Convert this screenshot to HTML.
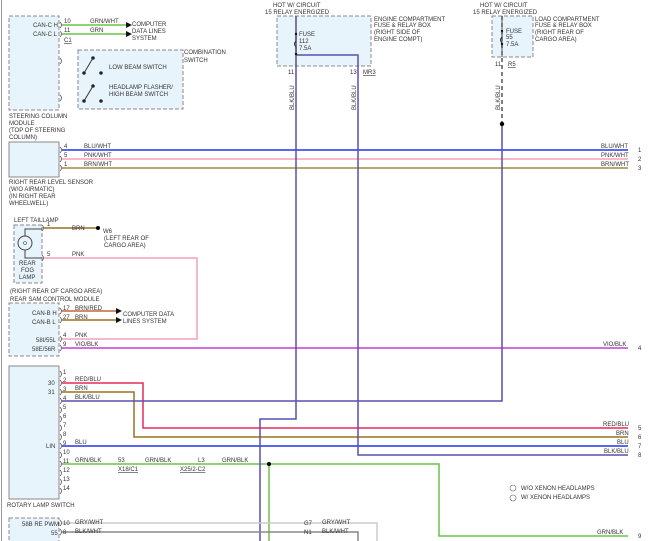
<!DOCTYPE html>
<html><head><meta charset="utf-8"><style>
html,body{margin:0;padding:0;background:#fff;width:650px;height:541px;overflow:hidden}
svg text{font-family:"Liberation Sans",sans-serif;font-size:6px;fill:#333}
</style></head><body>
<svg width="650" height="541" viewBox="0 0 650 541" xmlns="http://www.w3.org/2000/svg">
<line x1="1.5" y1="0" x2="1.5" y2="541" stroke="#999" stroke-width="1"/>
<g fill="#e8f4fb" stroke="#888" stroke-dasharray="4,2" stroke-width="1">
<rect x="9" y="16" width="50" height="94"/>
<rect x="78" y="50" width="105" height="59"/>
<rect x="14" y="225" width="28" height="58"/>
<rect x="9" y="303" width="50" height="53"/>
<rect x="9" y="518" width="50" height="30"/>
<rect x="277" y="16" width="94" height="50"/>
<rect x="492" y="16" width="41" height="41"/>
</g>
<g fill="#e8f4fb" stroke="#888" stroke-width="1">
<rect x="9" y="142" width="50" height="35"/>
<rect x="9" y="366" width="50" height="133"/>
</g>
<g fill="none" stroke="#555" stroke-width="0.8">
<path d="M60,22 q3,3 0,6 M60,31 q3,3 0,6 M60,58 q3,3 0,6 M60,95 q3,3 0,6 M60,147 q3,3 0,6 M60,156 q3,3 0,6 M60,165 q3,3 0,6 M42,225 q3,3 0,6 M42,255 q3,3 0,6 M60,308 q3,3 0,6 M60,317 q3,3 0,6 M60,336 q3,3 0,6 M60,345 q3,3 0,6"/>
<path d="M60,371 q3,3 0,6 M60,380 q3,3 0,6 M60,389 q3,3 0,6 M60,398 q3,3 0,6 M60,407 q3,3 0,6 M60,416 q3,3 0,6 M60,425 q3,3 0,6 M60,434 q3,3 0,6 M60,443 q3,3 0,6 M60,452 q3,3 0,6 M60,461 q3,3 0,6 M60,470 q3,3 0,6 M60,479 q3,3 0,6 M60,488 q3,3 0,6 M60,520 q3,3 0,6 M60,529 q3,3 0,6"/>
</g>
<g fill="none" stroke-width="1.5">
<polyline points="62,25 128,25" stroke="#6cc04a"/>
<polyline points="62,34 128,34" stroke="#6cc04a"/>
<polyline points="62,150 628,150" stroke="#2233ee"/>
<polyline points="62,159 628,159" stroke="#f4a0b8"/>
<polyline points="62,168 628,168" stroke="#a08a40"/>
<polyline points="44,228 97,228" stroke="#9b7020"/>
<polyline points="44,258 197,258 197,339 62,339" stroke="#f4a0b8"/>
<polyline points="62,311 118,311" stroke="#c86432"/>
<polyline points="62,320 118,320" stroke="#9b7020"/>
<polyline points="62,348 628,348" stroke="#c040d0"/>
<polyline points="62,383 143,383 143,428 628,428" stroke="#e8285a"/>
<polyline points="62,392 134,392 134,437 628,437" stroke="#9b7020"/>
<polyline points="62,401 502,401 502,124" stroke="#5a4fb0"/>
<polyline points="62,446 628,446" stroke="#2233ee"/>
<polyline points="62,464 439,464 439,536 628,536" stroke="#6cc04a"/>
<polyline points="269,464 269,541" stroke="#6cc04a"/>
<polyline points="296,16 296,419 260,419 260,541" stroke="#5a4fb0"/>
<polyline points="296,55 358,55 358,455 628,455" stroke="#5a4fb0"/>
<polyline points="62,523 377,523 377,541" stroke="#ccc"/>
<polyline points="62,532 358,532 358,541" stroke="#888"/>
</g>
<line x1="502" y1="16" x2="502" y2="124" stroke="#555" stroke-dasharray="4,3" stroke-width="1.5"/>
<line x1="296" y1="16" x2="296" y2="66" stroke="#555" stroke-width="1"/>
<line x1="502" y1="16" x2="502" y2="57" stroke="#555" stroke-width="1"/>
<circle cx="502" cy="124" r="2.2" fill="#000"/>
<circle cx="269" cy="464" r="2" fill="#000"/>
<circle cx="98" cy="228" r="2" fill="#000"/>
<path d="M126,22 l6,3 l-6,3z M126,31 l6,3 l-6,3z M116,308 l6,3 l-6,3z M116,317 l6,3 l-6,3z" fill="#111"/>
<g stroke="#333" stroke-width="1" fill="#111">
<line x1="84" y1="73" x2="93" y2="58"/><circle cx="84" cy="73" r="1.3"/><circle cx="93" cy="58" r="1.3"/><circle cx="101" cy="73" r="1.3"/>
<line x1="84" y1="101" x2="93" y2="86"/><circle cx="84" cy="101" r="1.3"/><circle cx="93" cy="86" r="1.3"/><circle cx="101" cy="101" r="1.3"/>
</g>
<circle cx="25" cy="243" r="7" fill="none" stroke="#444"/>
<circle cx="25" cy="243" r="1.5" fill="none" stroke="#444" stroke-width=".6"/>
<path d="M25,236 v-7 h17 M25,250 v8 h17" fill="none" stroke="#444"/>
<path d="M296,35 v6 q-3,3 0,6 v5 M502,31 v6 q-3,3 0,6 v5" fill="none" stroke="#333"/>
<g fill="#111"><circle cx="296" cy="34" r="1.2"/><circle cx="296" cy="54" r="1.2"/><circle cx="502" cy="31" r="1.2"/><circle cx="502" cy="44" r="1.2"/></g>
<text x="33" y="27">CAN-C H</text><text x="33" y="36">CAN-C L</text>
<text x="64" y="23">10</text><text x="90" y="23">GRN/WHT</text>
<text x="64" y="32">11</text><text x="90" y="32">GRN</text>
<text x="64" y="42" text-decoration="underline">C1</text>
<text x="132" y="26">COMPUTER</text><text x="132" y="33">DATA LINES</text><text x="132" y="40">SYSTEM</text>
<text x="184" y="54">COMBINATION</text><text x="184" y="62">SWITCH</text>
<text x="109" y="69">LOW BEAM SWITCH</text>
<text x="109" y="89">HEADLAMP FLASHER/</text><text x="109" y="96">HIGH BEAM SWITCH</text>
<text x="9" y="118">STEERING COLUMN</text><text x="9" y="125">MODULE</text><text x="9" y="132">(TOP OF STEERING</text><text x="9" y="139">COLUMN)</text>
<text x="64" y="148">4</text><text x="84" y="148">BLU/WHT</text>
<text x="64" y="157">5</text><text x="84" y="157">PNK/WHT</text>
<text x="64" y="166">1</text><text x="84" y="166">BRN/WHT</text>
<text x="9" y="184">RIGHT REAR LEVEL SENSOR</text><text x="9" y="191">(W/O AIRMATIC)</text><text x="9" y="198">(IN RIGHT REAR</text><text x="9" y="205">WHEELWELL)</text>
<text x="14" y="222">LEFT TAILLAMP</text>
<text x="47" y="226">1</text><text x="72" y="230">BRN</text>
<text x="103" y="233">W6</text><text x="104" y="240">(LEFT REAR OF</text><text x="104" y="247">CARGO AREA)</text>
<text x="47" y="256">5</text><text x="72" y="256">PNK</text>
<text x="19" y="265">REAR</text><text x="21" y="272">FOG</text><text x="19" y="279">LAMP</text>
<text x="10" y="293">(RIGHT REAR OF CARGO AREA)</text><text x="10" y="301">REAR SAM CONTROL MODULE</text>
<text x="32" y="315">CAN-B H</text><text x="32" y="324">CAN-B L</text>
<text x="63" y="310">17</text><text x="75" y="310">BRN/RED</text>
<text x="63" y="319">27</text><text x="75" y="319">BRN</text>
<text x="123" y="316">COMPUTER DATA</text><text x="123" y="323">LINES SYSTEM</text>
<text x="63" y="337">4</text><text x="75" y="337">PNK</text>
<text x="36" y="342">58I/55L</text><text x="32" y="351">58E/56R</text>
<text x="63" y="346">9</text><text x="75" y="346">VIO/BLK</text>
<text x="603" y="346">VIO/BLK</text><text x="638" y="350">4</text>
<text x="601" y="148">BLU/WHT</text><text x="638" y="152">1</text>
<text x="601" y="157">PNK/WHT</text><text x="638" y="161">2</text>
<text x="601" y="166">BRN/WHT</text><text x="638" y="170">3</text>
<text x="48" y="385">30</text><text x="48" y="394">31</text><text x="46" y="448">LIN</text>
<text x="63" y="374">1</text>
<text x="63" y="382">2</text><text x="75" y="381">RED/BLU</text>
<text x="63" y="391">3</text><text x="75" y="390">BRN</text>
<text x="63" y="400">4</text><text x="75" y="399">BLK/BLU</text>
<text x="63" y="409">5</text><text x="63" y="418">6</text><text x="63" y="427">7</text><text x="63" y="436">8</text>
<text x="63" y="445">9</text><text x="75" y="444">BLU</text>
<text x="63" y="454">10</text>
<text x="63" y="463">11</text><text x="75" y="462">GRN/BLK</text>
<text x="118" y="462">53</text><text x="145" y="462">GRN/BLK</text><text x="198" y="462">L3</text><text x="222" y="462">GRN/BLK</text>
<text x="118" y="471" text-decoration="underline">X18/C1</text><text x="180" y="471" text-decoration="underline">X25/2-C2</text>
<text x="63" y="472">12</text><text x="63" y="481">13</text><text x="63" y="490">14</text>
<text x="7" y="507">ROTARY LAMP SWITCH</text>
<text x="22" y="526">58B RE PWM</text><text x="51" y="535">55</text>
<text x="63" y="525">10</text><text x="75" y="524">GRY/WHT</text>
<text x="63" y="534">8</text><text x="75" y="533">BLK/WHT</text>
<text x="304" y="525">G7</text><text x="322" y="524">GRY/WHT</text>
<text x="304" y="534">N1</text><text x="322" y="533">BLK/WHT</text>
<text x="603" y="426">RED/BLU</text><text x="638" y="430">5</text>
<text x="616" y="435">BRN</text><text x="638" y="439">6</text>
<text x="617" y="444">BLU</text><text x="638" y="448">7</text>
<text x="604" y="453">BLK/BLU</text><text x="638" y="457">8</text>
<text x="597" y="534">GRN/BLK</text><text x="638" y="538">9</text>
<text x="521" y="490">W/O XENON HEADLAMPS</text><text x="521" y="499">W/ XENON HEADLAMPS</text>
<circle cx="513" cy="488" r="3" fill="none" stroke="#666" stroke-width=".6"/><circle cx="513" cy="498" r="3" fill="none" stroke="#666" stroke-width=".6"/>
<text x="273" y="7">HOT W/ CIRCUIT</text><text x="265" y="14">15 RELAY ENERGIZED</text>
<text x="299" y="36">FUSE</text><text x="299" y="43">112</text><text x="299" y="50">7.5A</text>
<text x="374" y="21">ENGINE COMPARTMENT</text><text x="374" y="27">FUSE &amp; RELAY BOX</text><text x="374" y="34">(RIGHT SIDE OF</text><text x="374" y="41">ENGINE COMPT)</text>
<text x="288" y="74">11</text><text x="350" y="74">13</text><text x="363" y="74" text-decoration="underline">MR3</text>
<text x="480" y="7">HOT W/ CIRCUIT</text><text x="473" y="14">15 RELAY ENERGIZED</text>
<text x="506" y="33">FUSE</text><text x="506" y="39">55</text><text x="506" y="46">7.5A</text>
<text x="535" y="21">LOAD COMPARTMENT</text><text x="535" y="27">FUSE &amp; RELAY BOX</text><text x="535" y="34">(RIGHT REAR OF</text><text x="535" y="41">CARGO AREA)</text>
<text x="495" y="66">11</text><text x="508" y="66" text-decoration="underline">R5</text>
<text transform="translate(294,110) rotate(-90)">BLK/BLU</text>
<text transform="translate(356,110) rotate(-90)">BLK/BLU</text>
<text transform="translate(500,110) rotate(-90)">BLK/BLU</text>
</svg>
</body></html>
